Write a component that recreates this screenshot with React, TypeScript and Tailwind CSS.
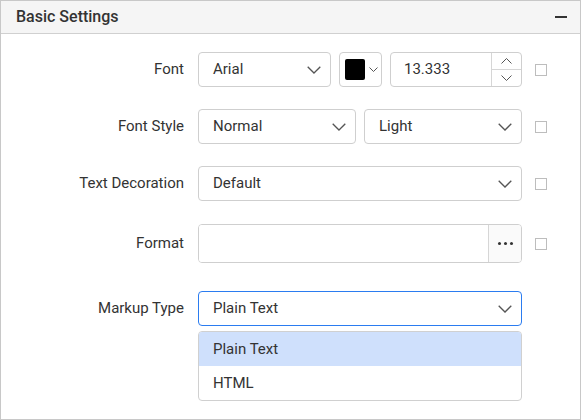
import React from 'react';

const Chevron = ({ small = false }: { small?: boolean }) =>
  small ? (
    <svg width="9" height="5" viewBox="0 0 9 5" fill="none">
      <path d="M0.5 0.5l4 4 4-4" stroke="#555" strokeWidth="1" />
    </svg>
  ) : (
    <svg width="14" height="8" viewBox="0 0 14 8" fill="none">
      <path d="M0.7 0.7l6.3 6.3 6.3-6.3" stroke="#555" strokeWidth="1.3" />
    </svg>
  );

const Select = ({ value, className = '', focused = false }: { value: string; className?: string; focused?: boolean }) => (
  <div
    className={`flex items-center justify-between h-full bg-white rounded-[4px] pl-[14px] pr-[9px] text-[15px] text-[#333] border ${
      focused ? 'border-[#2b7cf0]' : 'border-[#cfcfcf]'
    } ${className}`}
  >
    <span>{value}</span>
    <Chevron />
  </div>
);

const Check = () => <div className="w-[12px] h-[12px] border border-[#bdbdbd] bg-white" />;

const Row = ({ label, children, check = true, className = '' }: { label: string; children: React.ReactNode; check?: boolean; className?: string }) => (
  <div className={`flex items-center ${className}`}>
    <div className="w-[183px] text-right text-[15px] text-[#333]">{label}</div>
    <div className="ml-[14px] w-[324px] h-full flex gap-[8px]">{children}</div>
    {check && <div className="ml-[13px]"><Check /></div>}
  </div>
);

export default function App() {
  return (
    <div className="w-[581px] h-[420px] border border-[#c8c8c8] bg-white font-['Roboto',sans-serif]">
      <div className="h-[33px] bg-[#f5f5f5] border-b border-[#d0d0d0] flex items-center justify-between pl-[15px] pr-[13px]">
        <span className="text-[16px] font-medium text-[#333]">Basic Settings</span>
        <div className="w-[12px] h-[1.5px] bg-[#333]" />
      </div>

      <div className="flex flex-col pt-[18px]">
        <Row label="Font" className="h-[35px]">
          <Select value="Arial" className="w-[133px]" />
          <div className="w-[43px] h-full border border-[#cfcfcf] rounded-[4px] flex items-center pl-[5px] gap-[4px]">
            <div className="w-[20px] h-[21px] bg-black rounded-[2px]" />
            <Chevron small />
          </div>
          <div className="flex-1 h-full border border-[#cfcfcf] rounded-[4px] flex">
            <div className="flex-1 flex items-center pl-[13px] text-[15px] text-[#333]">13.333</div>
            <div className="w-[30px] border-l border-[#d6d6d6] flex flex-col">
              <div className="flex-1 flex items-center justify-center border-b border-[#d6d6d6]">
                <svg width="11" height="6" viewBox="0 0 11 6" fill="none">
                  <path d="M0.5 5.5l5-5 5 5" stroke="#555" strokeWidth="1" />
                </svg>
              </div>
              <div className="flex-1 flex items-center justify-center">
                <svg width="11" height="6" viewBox="0 0 11 6" fill="none">
                  <path d="M0.5 0.5l5 5 5-5" stroke="#555" strokeWidth="1" />
                </svg>
              </div>
            </div>
          </div>
        </Row>

        <Row label="Font Style" className="h-[35px] mt-[22px]">
          <Select value="Normal" className="w-[158px]" />
          <Select value="Light" className="flex-1" />
        </Row>

        <Row label="Text Decoration" className="h-[35px] mt-[22px]">
          <Select value="Default" className="flex-1" />
        </Row>

        <Row label="Format" className="h-[39px] mt-[23px]">
          <div className="flex-1 h-full border border-[#cfcfcf] rounded-[4px] flex overflow-hidden">
            <div className="flex-1 bg-white" />
            <div className="w-[33px] border-l border-[#d6d6d6] bg-[#fafafa] flex items-center justify-center gap-[3px]">
              <div className="w-[3px] h-[3px] rounded-full bg-[#333]" />
              <div className="w-[3px] h-[3px] rounded-full bg-[#333]" />
              <div className="w-[3px] h-[3px] rounded-full bg-[#333]" />
            </div>
          </div>
        </Row>

        <Row label="Markup Type" check={false} className="h-[35px] mt-[28px]">
          <Select value="Plain Text" focused className="flex-1" />
        </Row>

        <div className="ml-[197px] mt-[5px] w-[324px] border border-[#d0d0d0] rounded-[4px] overflow-hidden bg-white text-[15px] text-[#333]">
          <div className="h-[34px] flex items-center pl-[14px] bg-[#cfe0fc]">Plain Text</div>
          <div className="h-[34px] flex items-center pl-[14px]">HTML</div>
        </div>
      </div>
    </div>
  );
}
